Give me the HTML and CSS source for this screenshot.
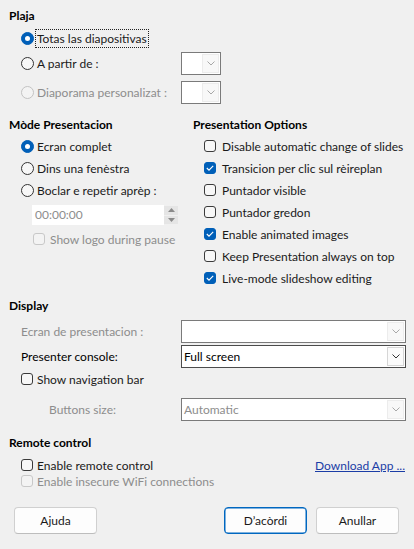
FILE: index.html
```html
<!DOCTYPE html>
<html>
<head>
<meta charset="utf-8">
<link rel="stylesheet" href="styles.css">
</head>
<body>
<div class="dlg">
  <div class="h h-plaja">Plaja</div>
  <div class="range">
    <div class="row r1"><span class="radio on"></span><span class="lbl focus">Totas las diapositivas</span></div>
    <div class="row r2"><span class="radio"></span><span class="lbl fix">A partir de :</span><span class="combo small"><span class="cv"></span><span class="cb"><svg width="8" height="5" viewBox="0 0 8 5"><path d="M0.5 0.5 L4 4 L7.5 0.5" fill="none" stroke="#a8a8a8" stroke-width="1"/></svg></span></span></div>
    <div class="row r3 dis"><span class="radio"></span><span class="lbl fix">Diaporama personalizat :</span><span class="combo small"><span class="cv"></span><span class="cb"><svg width="8" height="5" viewBox="0 0 8 5"><path d="M0.5 0.5 L4 4 L7.5 0.5" fill="none" stroke="#a8a8a8" stroke-width="1"/></svg></span></span></div>
  </div>

  <div class="cols">
    <div class="col-l">
      <div class="h">Mòde Presentacion</div>
      <div class="list">
        <div class="row rr"><span class="radio on"></span><span class="lbl">Ecran complet</span></div>
        <div class="row rr"><span class="radio"></span><span class="lbl">Dins una fenèstra</span></div>
        <div class="row rr"><span class="radio"></span><span class="lbl">Boclar e repetir aprèp :</span></div>
      </div>
      <div class="time">
        <span class="tv">00:00:00</span>
        <span class="spin">
          <span class="sb"><svg width="7" height="4" viewBox="0 0 7 4"><path d="M0 4 L3.5 0 L7 4 Z" fill="#8a8a8a"/></svg></span>
          <span class="sb"><svg width="7" height="4" viewBox="0 0 7 4"><path d="M0 0 L3.5 4 L7 0 Z" fill="#8a8a8a"/></svg></span>
        </span>
      </div>
      <div class="row logo dis"><span class="chk"></span><span class="lbl">Show logo during pause</span></div>
    </div>
    <div class="col-r">
      <div class="h">Presentation Options</div>
      <div class="list">
        <div class="row rc"><span class="chk"></span><span class="lbl">Disable automatic change of slides</span></div>
        <div class="row rc"><span class="chk on"><svg width="8" height="6" viewBox="0 0 8 6"><path d="M0.8 3 L3 5.2 L7.2 0.8" fill="none" stroke="#fff" stroke-width="1.1"/></svg></span><span class="lbl">Transicion per clic sul rèireplan</span></div>
        <div class="row rc"><span class="chk"></span><span class="lbl">Puntador visible</span></div>
        <div class="row rc"><span class="chk"></span><span class="lbl">Puntador gredon</span></div>
        <div class="row rc"><span class="chk on"><svg width="8" height="6" viewBox="0 0 8 6"><path d="M0.8 3 L3 5.2 L7.2 0.8" fill="none" stroke="#fff" stroke-width="1.1"/></svg></span><span class="lbl">Enable animated images</span></div>
        <div class="row rc"><span class="chk"></span><span class="lbl">Keep Presentation always on top</span></div>
        <div class="row rc"><span class="chk on"><svg width="8" height="6" viewBox="0 0 8 6"><path d="M0.8 3 L3 5.2 L7.2 0.8" fill="none" stroke="#fff" stroke-width="1.1"/></svg></span><span class="lbl">Live-mode slideshow editing</span></div>
      </div>
    </div>
  </div>

  <div class="h h-disp">Display</div>
  <div class="disp">
    <div class="drow d1 dis"><span class="dl">Ecran de presentacion :</span><span class="combo wide"><span class="cv"></span><span class="cb"><svg width="8" height="5" viewBox="0 0 8 5"><path d="M0.5 0.5 L4 4 L7.5 0.5" fill="none" stroke="#a8a8a8" stroke-width="1"/></svg></span></span></div>
    <div class="drow d2"><span class="dl">Presenter console:</span><span class="combo wide act"><span class="cv">Full screen</span><span class="cb"><svg width="8" height="5" viewBox="0 0 8 5"><path d="M0.5 0.5 L4 4 L7.5 0.5" fill="none" stroke="#333" stroke-width="1"/></svg></span></span></div>
    <div class="row nav"><span class="chk"></span><span class="lbl">Show navigation bar</span></div>
    <div class="drow d3 dis"><span class="dl ind">Buttons size:</span><span class="combo wide"><span class="cv">Automatic</span><span class="cb"><svg width="8" height="5" viewBox="0 0 8 5"><path d="M0.5 0.5 L4 4 L7.5 0.5" fill="none" stroke="#a8a8a8" stroke-width="1"/></svg></span></span></div>
  </div>

  <div class="h h-rem">Remote control</div>
  <div class="remote">
    <div class="row rem1"><span class="chk"></span><span class="lbl grow">Enable remote control</span><a class="link">Download App ...</a></div>
    <div class="row rem2 dis"><span class="chk"></span><span class="lbl">Enable insecure WiFi connections</span></div>
  </div>

  <div class="btns">
    <button class="btn">Ajuda</button>
    <div class="btns-r">
      <button class="btn def">D’acòrdi</button>
      <button class="btn">Anullar</button>
    </div>
  </div>
</div>
</body>
</html>
```

FILE: styles.css
```css
* { box-sizing: border-box; }
html, body { margin: 0; padding: 0; }
body {
  background: #f0f0f0;
  font-family: Lato, "Noto Sans", sans-serif;
  font-size: 12px;
  color: #1a1a1a;
  width: 414px;
  height: 549px;
  overflow: hidden;
}
.dlg { padding: 8px 9px 0 9px; }
.h {
  font-weight: bold;
  height: 16px;
  line-height: 16px;
  color: #000;
}
.row { display: flex; align-items: center; }
.lbl { white-space: nowrap; }
.grow { flex: 1; }
.fix { width: 144px; flex: none; }
.dis { color: #8d8d8d; }

/* radios */
.radio {
  width: 13px; height: 13px;
  border-radius: 50%;
  border: 1px solid #333;
  background: #f7f7f7;
  margin-right: 3px;
  flex: none;
  position: relative;
}
.radio.on { background: #005fb8; border-color: #005fb8; }
.radio.on::after {
  content: "";
  position: absolute;
  left: 3px; top: 3px;
  width: 5px; height: 5px;
  border-radius: 50%;
  background: #fff;
}
.dis .radio { border-color: #c3c3c3; background: #f3f3f3; }

/* checkboxes */
.chk {
  width: 12px; height: 12px;
  border-radius: 3px;
  border: 1px solid #3a3a3a;
  background: #f7f7f7;
  flex: none;
  display: flex; align-items: center; justify-content: center;
}
.chk.on { background: #005fb8; border-color: #005fb8; }
.dis .chk { border-color: #c8c8c8; background: #f3f3f3; }

/* range section */
.range { padding-left: 12px; margin-top: 4px; }
.r1 { height: 20px; }
.focus { outline: 1px dotted #222; outline-offset: 0; padding: 0 1px; margin-left: -1px; line-height: 17px; }
.r2 { height: 23px; margin-top: 4px; }
.r3 { height: 23px; margin-top: 6px; }

.combo {
  display: flex;
  height: 23px;
  background: #fff;
  border: 1px solid #7a7a7a;
  flex: none;
}
.combo.small { width: 40px; }
.combo.wide { width: 225px; }
.combo.act { border-color: #4c4c4c; }
.cv { flex: 1; line-height: 21px; padding-left: 2px; white-space: nowrap; }
.combo .cb {
  width: 17px;
  margin: 1px;
  background: #f8f8f8;
  border: 1px solid #ececec;
  display: flex; align-items: center; justify-content: center;
}
.combo.act .cb { border-color: #d6d6d6; background: #fbfbfb; }

/* columns */
.cols { display: grid; grid-template-columns: 184px 1fr; margin-top: 13px; }
.list { margin-top: 2px; }
.col-l .list { padding-left: 12px; }
.rr { height: 22px; }
.col-r .list { padding-left: 11px; }
.rc { height: 22px; }
.rc .chk { margin-right: 6px; }
.time {
  margin: 4px 0 0 23px;
  width: 146px;
  height: 20px;
  display: flex;
}
.tv {
  flex: 1;
  background: #fff;
  color: #8d8d8d;
  line-height: 20px;
  padding-left: 3px;
}
.spin { width: 14px; display: flex; flex-direction: column; gap: 1px; padding: 1px 0; }
.sb { flex: 1; background: #e5e5e5; display: flex; align-items: center; justify-content: center; }
.logo { height: 20px; margin: 4px 0 0 24px; }
.logo .chk { margin-right: 5px; }

/* display */
.h-disp { margin-top: 9px; }
.disp { margin-top: 6px; }
.drow { display: flex; align-items: center; }
.dl { width: 172px; flex: none; padding-left: 12px; white-space: nowrap; }
.dl.ind { padding-left: 40px; }
.d2 { margin-top: 2px; color: #000; }
.d2 .cv { color: #000; }
.nav { height: 22px; padding-left: 12px; }
.nav .chk, .rem1 .chk, .rem2 .chk { margin-right: 4px; }
.d3 { margin-top: 8px; }

/* remote */
.h-rem { margin-top: 14px; }
.remote { margin-top: 6px; padding-left: 12px; }
.rem1 { height: 16px; }
.rem2 { height: 16px; }
.link { color: #1b3da6; text-decoration: underline; white-space: nowrap; }

/* buttons */
.btns {
  display: flex;
  justify-content: space-between;
  margin: 18px 6px 0 5px;
}
.btns-r { display: flex; gap: 9px; }
.btn {
  width: 83px;
  height: 27px;
  background: #fdfdfd;
  border: 1px solid #d0d0d0;
  border-bottom-color: #bdbdbd;
  border-radius: 4px;
  font-family: inherit;
  font-size: 12px;
  color: #1a1a1a;
  padding: 0;
}
.btn.def { border: 1px solid #0067c0; box-shadow: inset 0 0 0 0.5px #0067c0; }
```
